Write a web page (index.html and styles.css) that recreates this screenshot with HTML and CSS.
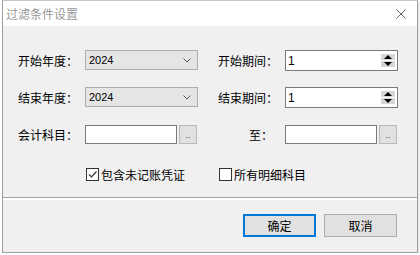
FILE: index.html
```html
<!DOCTYPE html>
<html lang="zh-CN">
<head>
    <meta charset="UTF-8">
    <title>过滤条件设置</title>
    <link rel="stylesheet" href="styles.css">
</head>
<body>
    <div class="window">
        <div class="titlebar">
            <span class="title">过滤条件设置</span>
            <svg class="close" viewBox="0 0 10 10" width="10" height="10">
                <path d="M0.5,0.5 L9.5,9.5 M9.5,0.5 L0.5,9.5" stroke="#666" stroke-width="1" fill="none"/>
            </svg>
        </div>

        <div class="content">
            <div class="form">
                <label class="label">开始年度：</label>
                <div class="combo">
                    <span>2024</span>
                    <svg class="chevron" viewBox="0 0 8 5" width="8" height="5">
                        <path d="M0.5,0.5 L4,4 L7.5,0.5" stroke="#555" stroke-width="1" fill="none"/>
                    </svg>
                </div>
                <label class="label second">开始期间：</label>
                <div class="spin">
                    <span>1</span>
                    <div class="spin-btns">
                        <svg viewBox="0 0 14 6" width="14" height="6"><rect width="14" height="6" fill="#d6d6d6"/><path d="M3,5 L11,5 L7,1 Z" fill="#000"/></svg>
                        <svg viewBox="0 0 14 6" width="14" height="6"><rect width="14" height="6" fill="#d6d6d6"/><path d="M3,1 L11,1 L7,5 Z" fill="#000"/></svg>
                    </div>
                </div>

                <label class="label">结束年度：</label>
                <div class="combo">
                    <span>2024</span>
                    <svg class="chevron" viewBox="0 0 8 5" width="8" height="5">
                        <path d="M0.5,0.5 L4,4 L7.5,0.5" stroke="#555" stroke-width="1" fill="none"/>
                    </svg>
                </div>
                <label class="label second">结束期间：</label>
                <div class="spin">
                    <span>1</span>
                    <div class="spin-btns">
                        <svg viewBox="0 0 14 6" width="14" height="6"><rect width="14" height="6" fill="#d6d6d6"/><path d="M3,5 L11,5 L7,1 Z" fill="#000"/></svg>
                        <svg viewBox="0 0 14 6" width="14" height="6"><rect width="14" height="6" fill="#d6d6d6"/><path d="M3,1 L11,1 L7,5 Z" fill="#000"/></svg>
                    </div>
                </div>

                <label class="label">会计科目：</label>
                <div class="picker">
                    <div class="text-box"></div>
                    <button class="dots">..</button>
                </div>
                <label class="label second right">至：</label>
                <div class="picker">
                    <div class="text-box"></div>
                    <button class="dots">..</button>
                </div>

                <span class="check-cell first">
                    <span class="checkbox">
                        <svg viewBox="0 0 11 11" width="11" height="11">
                            <path d="M2,5.5 L4.5,8 L9.5,2.5" stroke="#333" stroke-width="1.2" fill="none"/>
                        </svg>
                    </span>
                    包含未记账凭证
                </span>
                <span class="check-cell second">
                    <span class="checkbox"></span>
                    所有明细科目
                </span>
            </div>

            <div class="footer">
                <button class="btn default">确定</button>
                <button class="btn">取消</button>
            </div>
        </div>
    </div>
</body>
</html>
```

FILE: styles.css
```css
* {
    margin: 0;
    padding: 0;
    box-sizing: border-box;
}

body {
    font-family: "Liberation Sans", "Noto Sans CJK SC", sans-serif;
    font-size: 12px;
    color: #000;
    background-color: #fff;
}

/* Window frame */
.window {
    width: 416px;
    height: 253px;
    margin-left: 2px;
    border: 1px solid #a0a0a0;
    border-top-color: #c8c8c8;
    background-color: #f0f0f0;
    display: flex;
    flex-direction: column;
    box-shadow: 1px 1px 2px rgba(0, 0, 0, 0.15);
}

.titlebar {
    height: 25px;
    background-color: #fff;
    display: flex;
    align-items: center;
    justify-content: space-between;
    padding: 0 10px 0 3px;
}

.title {
    color: #999;
    font-size: 12px;
    font-family: "Noto Sans CJK SC", sans-serif;
}

.close {
    margin-right: 1px;
}

.content {
    flex: 1;
    display: flex;
    flex-direction: column;
}

/* Form grid: label, field, label, field */
.form {
    display: grid;
    grid-template-columns: 67px 113px 87px 113px;
    grid-auto-rows: 20px;
    row-gap: 17px;
    padding: 24px 0 0 15px;
}

.label {
    display: flex;
    align-items: center;
    font-family: "Noto Sans CJK SC", sans-serif;
    white-space: nowrap;
}

.label.second {
    padding-left: 20px;
}

.label.right {
    justify-content: flex-end;
    padding-right: 12px;
}

.combo {
    display: flex;
    align-items: center;
    justify-content: space-between;
    background-color: #e5e5e5;
    border: 1px solid #adadad;
    padding: 0 6px 0 3px;
    font-size: 11px;
}

.spin {
    display: flex;
    align-items: center;
    justify-content: space-between;
    background-color: #fff;
    border: 1px solid #7a7a7a;
    padding: 0 2px 0 2px;
    height: 21px;
}

.spin-btns {
    display: flex;
    flex-direction: column;
    gap: 1px;
}

.spin-btns svg {
    display: block;
}

.picker {
    display: flex;
    gap: 2px;
    height: 19px;
    align-self: end;
    margin-top: 5px;
}

.text-box {
    width: 92px;
    background-color: #fff;
    border: 1px solid #7a7a7a;
}

.dots {
    width: 18px;
    border: 1px solid #b8b8b8;
    background-color: #e1e1e1;
    color: #444;
    font-size: 9px;
    font-family: "Liberation Sans", sans-serif;
    line-height: 1;
    padding-top: 2px;
}

/* Checkbox row */
.check-cell {
    display: flex;
    align-items: center;
    gap: 2px;
    margin-top: 6px;
    font-family: "Noto Sans CJK SC", sans-serif;
    white-space: nowrap;
}

.check-cell.first {
    grid-column: 2;
    padding-left: 1px;
}

.check-cell.second {
    grid-column: 3 / 5;
    padding-left: 21px;
}

.checkbox {
    width: 13px;
    height: 13px;
    border: 1px solid #333;
    background-color: #fff;
    display: flex;
    align-items: center;
    justify-content: center;
}

.checkbox svg {
    display: block;
}

/* Footer with buttons */
.footer {
    margin-top: auto;
    height: 55px;
    border-top: 1px solid #a0a0a0;
    box-shadow: inset 0 1px 0 #fff, inset 0 2px 0 #fff;
    display: flex;
    justify-content: flex-end;
    align-items: flex-start;
    gap: 8px;
    padding: 16px 20px 0 0;
}

.btn {
    width: 73px;
    height: 23px;
    background-color: #e1e1e1;
    border: 1px solid #adadad;
    font-family: "Noto Sans CJK SC", sans-serif;
    font-size: 12px;
    color: #000;
}

.btn.default {
    border: 2px solid #0078d7;
}
```
